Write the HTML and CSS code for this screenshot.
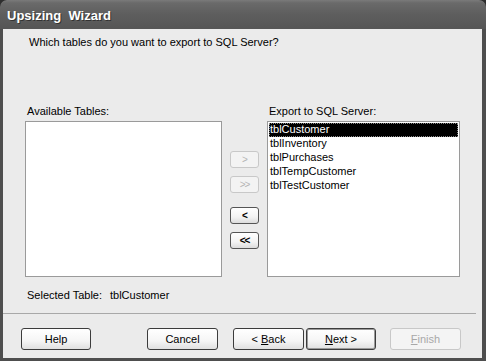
FILE: index.html
```html
<!DOCTYPE html>
<html>
<head>
<meta charset="utf-8">
<link rel="stylesheet" href="styles.css">
</head>
<body>
<div class="window">
  <div class="titlebar"><span class="title">Upsizing&nbsp; Wizard</span></div>
  <div class="client">
    <div class="question">Which tables do you want to export to SQL Server?</div>
    <div class="picker">
      <div class="col">
        <div class="label">Available Tables:</div>
        <div class="listbox left"></div>
      </div>
      <div class="movers">
        <div class="mbtn disabled b1">&gt;</div>
        <div class="mbtn disabled b2">&gt;&gt;</div>
        <div class="mbtn b3">&lt;</div>
        <div class="mbtn b4">&lt;&lt;</div>
      </div>
      <div class="col">
        <div class="label">Export to SQL Server:</div>
        <div class="listbox right">
          <div class="item selected">tblCustomer</div>
          <div class="item">tblInventory</div>
          <div class="item">tblPurchases</div>
          <div class="item">tblTempCustomer</div>
          <div class="item">tblTestCustomer</div>
        </div>
      </div>
    </div>
    <div class="selinfo"><span class="sellabel">Selected Table:</span><span>tblCustomer</span></div>
    <div class="sep"></div>
    <div class="buttons">
      <div class="btn help"><span>Help</span></div>
      <div class="btn cancel"><span>Cancel</span></div>
      <div class="btn back"><span>&lt; <u>B</u>ack</span></div>
      <div class="btn next default"><span><u>N</u>ext &gt;</span></div>
      <div class="btn finish disabled"><span><u>F</u>inish</span></div>
    </div>
  </div>
</div>
</body>
</html>
```
FILE: styles.css
```css
html, body {
  margin: 0;
  padding: 0;
  background: #2e2e2e;
}
.window {
  width: 486px;
  height: 361px;
  box-sizing: border-box;
  background: #4e4e4e;
  border-radius: 7px 7px 0 0;
  display: flex;
  flex-direction: column;
  font-family: "Liberation Sans", "DejaVu Sans", sans-serif;
  font-size: 11px;
  color: #000;
  overflow: hidden;
}
.titlebar {
  height: 29px;
  flex: none;
  background: linear-gradient(#7a7a7a 0px, #6a6a6a 3px, #5e5e5e 14px, #565656 28px);
  border-radius: 7px 7px 0 0;
  display: flex;
  align-items: center;
  padding-left: 7px;
}
.title {
  font-family: "Liberation Sans", sans-serif;
  font-weight: bold;
  font-size: 13px;
  color: #fff;
  text-shadow: 1px 1px 0 #333;
  margin-top: 2px;
}
.client {
  flex: 1;
  margin: 0 4px 3px 3px;
  background: #ebebeb;
  display: flex;
  flex-direction: column;
}
.question {
  padding: 6px 0 0 26px;
  height: 14px;
  line-height: 14px;
}
.picker {
  margin-top: 55px;
  margin-left: 22px;
  display: grid;
  grid-template-columns: 197px 29px 193px;
  column-gap: 8px;
}
.col {
  display: flex;
  flex-direction: column;
}
.label {
  height: 14px;
  line-height: 14px;
  padding-left: 2px;
  margin-bottom: 3px;
}
.listbox {
  height: 156px;
  box-sizing: border-box;
  background: #fff;
  border: 1px solid #9a9a9a;
  padding: 1px 1px;
}
.item {
  height: 14px;
  line-height: 13px;
  padding-left: 1px;
  white-space: nowrap;
}
.item.selected {
  background: #000;
  color: #fff;
  outline: 1px dotted #888;
  outline-offset: -1px;
}
.movers {
  display: flex;
  flex-direction: column;
  padding-top: 47px;
}
.mbtn {
  width: 29px;
  height: 17px;
  box-sizing: border-box;
  border: 1px solid #555;
  border-radius: 3px;
  background: linear-gradient(#ffffff, #f3f3f3 60%, #dcdcdc);
  display: flex;
  align-items: center;
  justify-content: center;
  font-size: 10px;
  font-weight: bold;
  letter-spacing: -1px;
}
.mbtn.disabled {
  border-color: #c8c8c8;
  color: #b5b5b5;
  background: #f3f3f3;
  font-weight: normal;
}
.b2 { margin-top: 8px; }
.b3 { margin-top: 14px; }
.b4 { margin-top: 8px; }
.selinfo {
  margin-top: 11px;
  padding-left: 24px;
  height: 14px;
  line-height: 14px;
}
.sellabel {
  display: inline-block;
  width: 83px;
}
.sep {
  margin-top: 11px;
  height: 1px;
  background: #a8a8a8;
  margin-right: 6px;
}
.buttons {
  margin-top: 14px;
  display: flex;
  padding-left: 18px;
}
.btn {
  height: 22px;
  box-sizing: border-box;
  border: 1px solid #3c3c3c;
  border-radius: 3px;
  background: linear-gradient(#ffffff, #f5f5f5 60%, #e0e0e0);
  display: flex;
  align-items: center;
  justify-content: center;
  width: 70px;
  white-space: pre;
}
.btn u { text-decoration: underline; }
.cancel { margin-left: 56px; width: 71px; }
.back { margin-left: 15px; width: 71px; }
.next { margin-left: 2px; width: 70px; box-shadow: inset 0 0 0 1px #9a9a9a; }
.finish { margin-left: 14px; width: 71px; border-color: #c8c8c8; color: #a8a8a8; background: #f4f4f4; }
```
